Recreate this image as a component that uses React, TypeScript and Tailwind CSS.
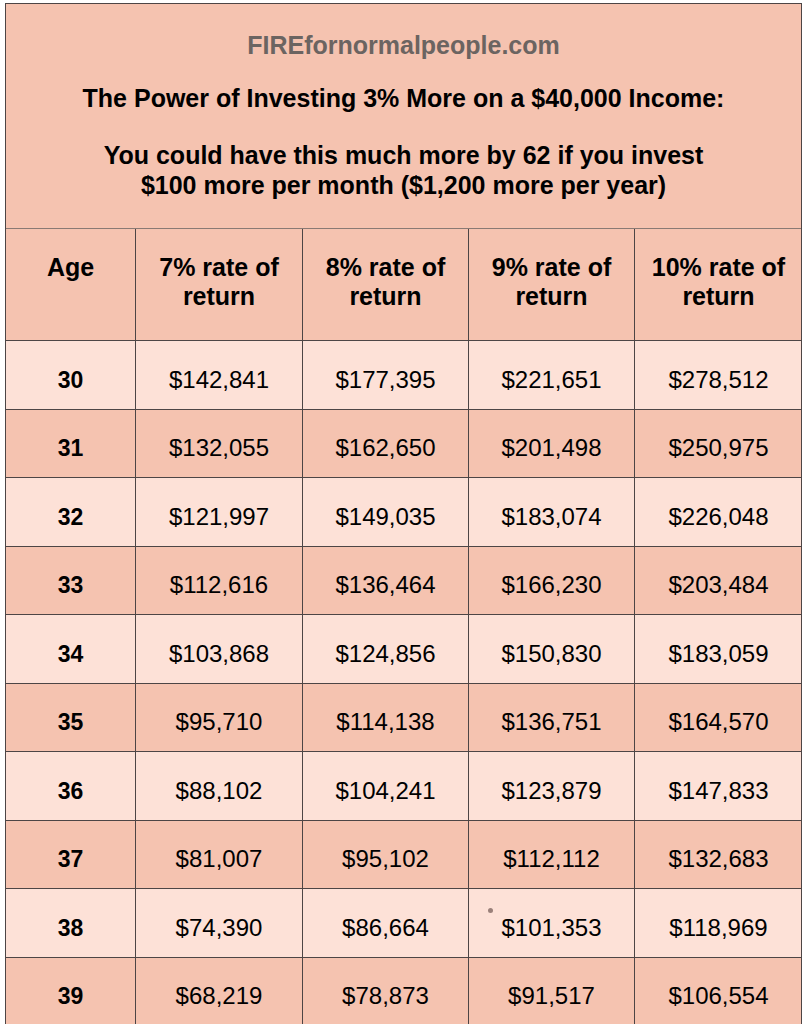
const cols = ["7%", "8%", "9%", "10%"];

const rows: [number, string[]][] = [
  [30, ["$142,841", "$177,395", "$221,651", "$278,512"]],
  [31, ["$132,055", "$162,650", "$201,498", "$250,975"]],
  [32, ["$121,997", "$149,035", "$183,074", "$226,048"]],
  [33, ["$112,616", "$136,464", "$166,230", "$203,484"]],
  [34, ["$103,868", "$124,856", "$150,830", "$183,059"]],
  [35, ["$95,710", "$114,138", "$136,751", "$164,570"]],
  [36, ["$88,102", "$104,241", "$123,879", "$147,833"]],
  [37, ["$81,007", "$95,102", "$112,112", "$132,683"]],
  [38, ["$74,390", "$86,664", "$101,353", "$118,969"]],
  [39, ["$68,219", "$78,873", "$91,517", "$106,554"]],
];

const grid = "grid grid-cols-[130px_167px_166px_166px_167px]";

export default function App() {
  return (
    <div className="min-h-[1024px] bg-white pt-[3px] pl-[5px] font-['Liberation_Sans',Arial,sans-serif] text-black">
      <div className="w-[797px] border-x border-t border-[#4d4545]">
        <header className="h-[225px] border-b border-[#8a7a74] bg-[#f5c3b0] pt-[26px] text-center">
          <p className="text-[25px] font-bold leading-[30px] text-[#6b6461]">
            FIREfornormalpeople.com
          </p>
          <h1 className="mt-[23px] text-[25px] font-bold leading-[30px]">
            The Power of Investing 3% More on a $40,000 Income:
          </h1>
          <p className="mt-[27px] text-[25px] font-bold leading-[30px]">
            You could have this much more by 62 if you invest
            <br />
            $100 more per month ($1,200 more per year)
          </p>
        </header>

        <div className={`${grid} h-[112px] border-b border-[#4d4545] bg-[#f5c3b0]`}>
          <div className="flex justify-center border-r border-[#4d4545] pt-[24px] text-[25px] font-bold leading-[29px]">
            Age
          </div>
          {cols.map((c, i) => (
            <div
              key={c}
              className={`pt-[24px] text-center text-[25px] font-bold leading-[29px] ${
                i < cols.length - 1 ? "border-r border-[#4d4545]" : ""
              }`}
            >
              {c} rate of
              <br />
              return
            </div>
          ))}
        </div>

        {rows.map(([age, vals], r) => (
          <div
            key={age}
            className={`${grid} h-[68.5px] border-b border-[#4d4545] ${
              r % 2 === 0 ? "bg-[#fde1d7]" : "bg-[#f5c3b0]"
            }`}
          >
            <div className="flex items-center justify-center border-r border-[#4d4545] pt-[10px] text-[23px] font-bold">
              {age}
            </div>
            {vals.map((v, i) => (
              <div
                key={i}
                className={`relative flex items-center justify-center pt-[10px] text-[24px] ${
                  i < vals.length - 1 ? "border-r border-[#4d4545]" : ""
                }`}
              >
                {/* kleiner Punkt im Original-Screenshot */}
                {age === 38 && i === 2 && (
                  <span className="absolute left-[19px] top-[19px] h-[5px] w-[5px] rounded-full bg-[#9a807a]" />
                )}
                {v}
              </div>
            ))}
          </div>
        ))}
      </div>
    </div>
  );
}
